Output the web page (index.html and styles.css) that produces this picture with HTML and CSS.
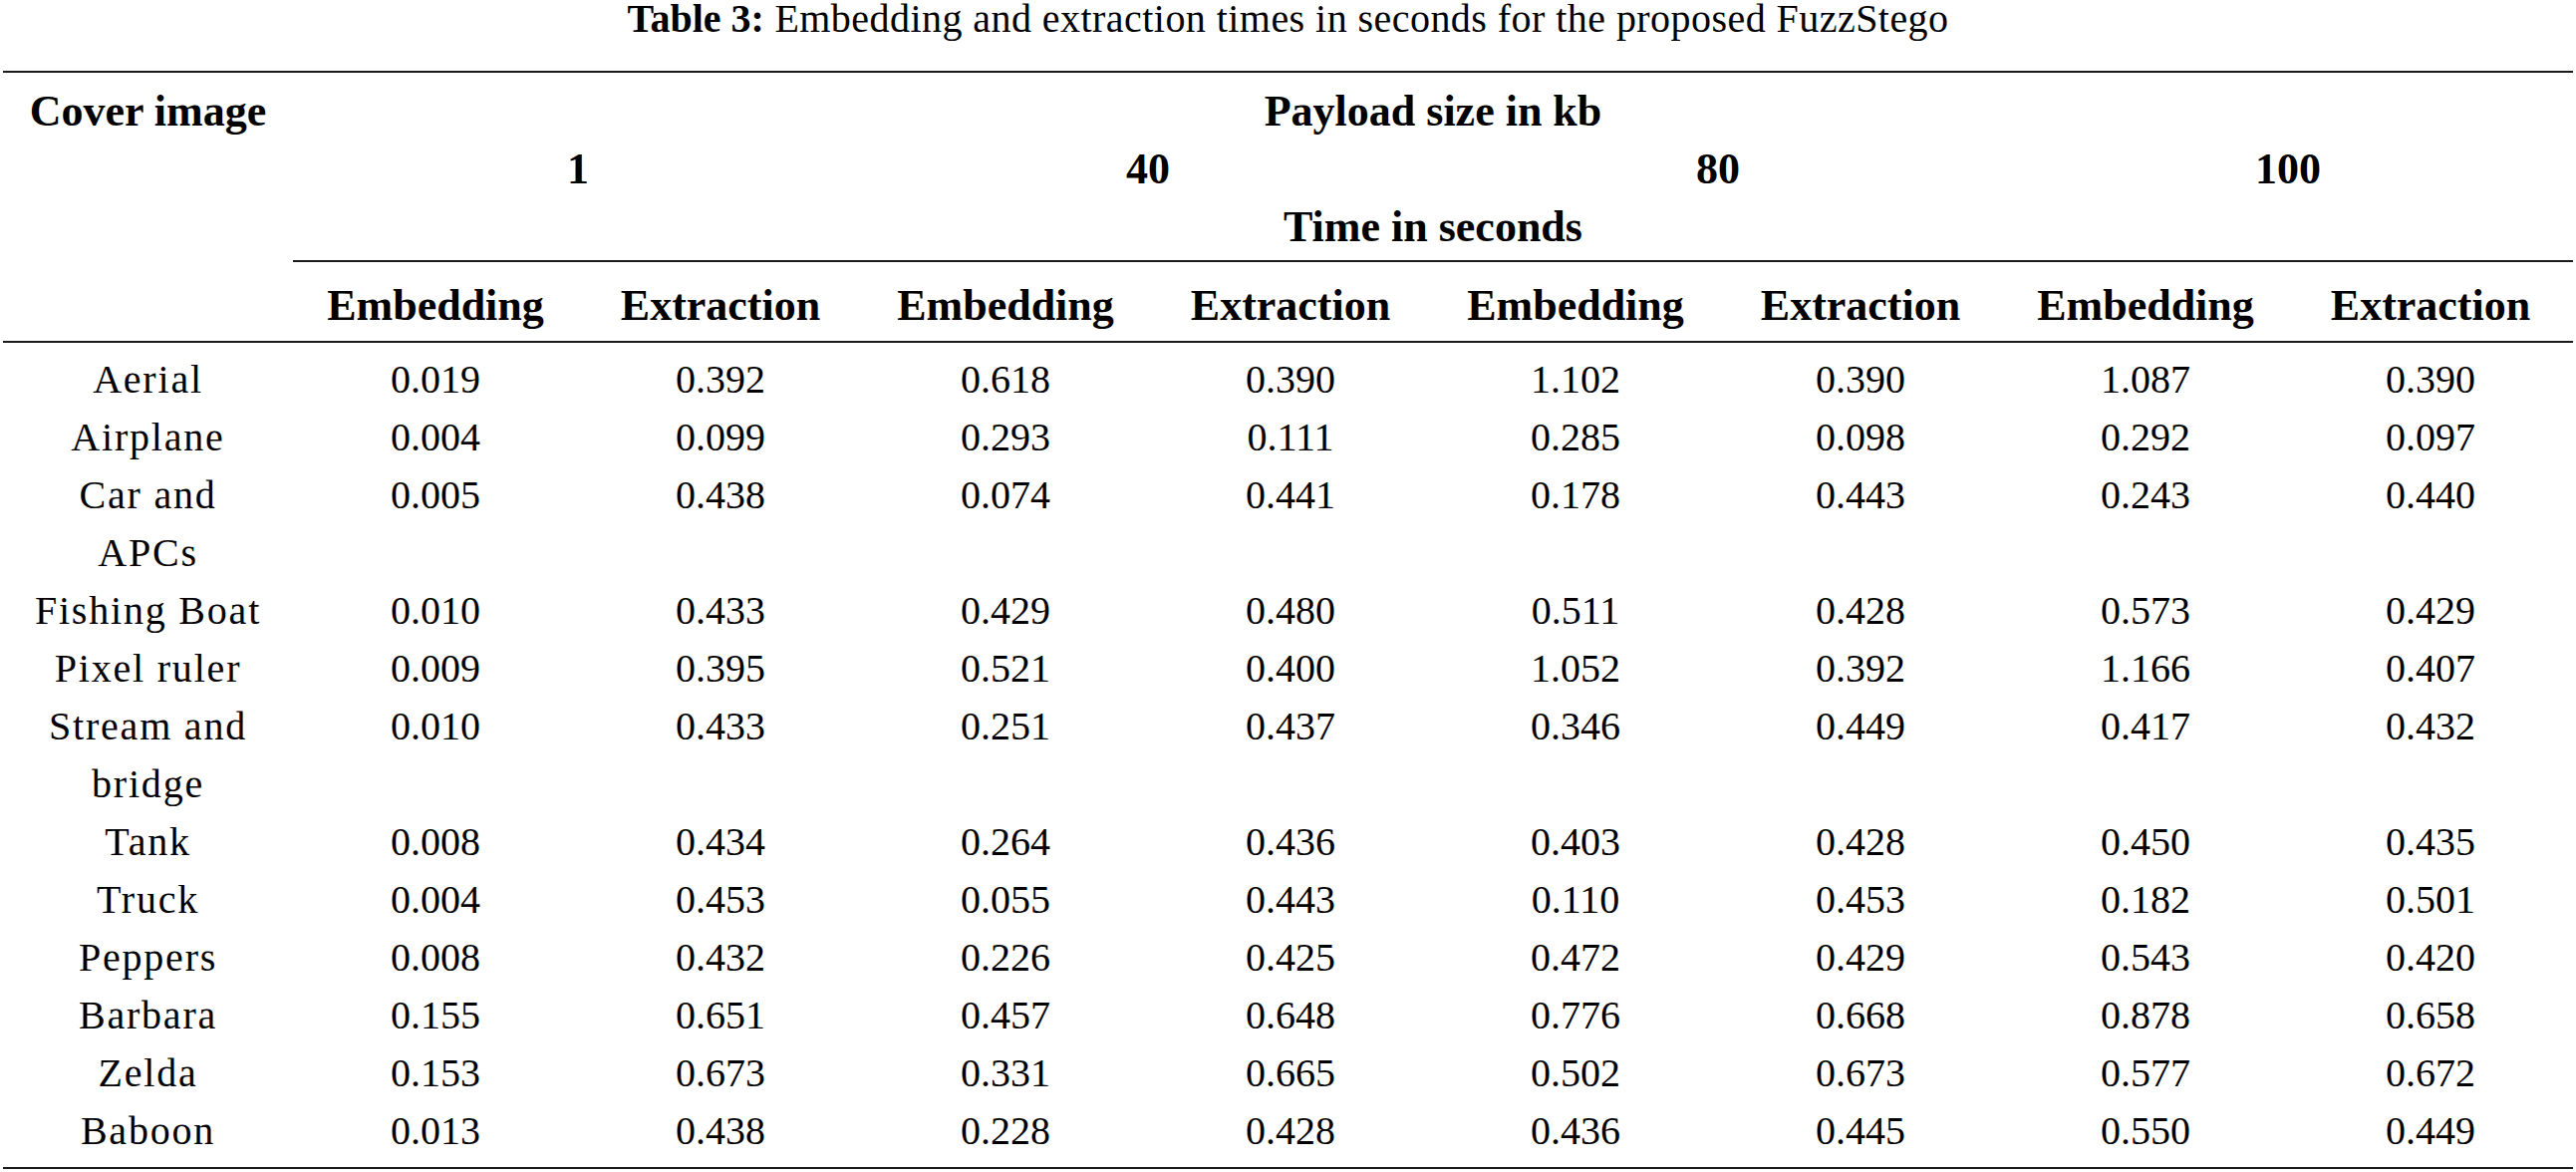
FILE: index.html
```html
<!DOCTYPE html>
<html lang="en">
<head>
<meta charset="utf-8">
<title>Table 3</title>
<link rel="stylesheet" href="styles.css">
</head>
<body>
<div class="page">
  <p class="caption"><b>Table 3:</b> Embedding and extraction times in seconds for the proposed FuzzStego</p>
  <table class="data-table">
    <thead>
      <tr class="h1">
        <th class="cover">Cover image</th>
        <th colspan="8">Payload size in kb</th>
      </tr>
      <tr class="h2">
        <th class="cover"></th>
        <th colspan="2">1</th>
        <th colspan="2">40</th>
        <th colspan="2">80</th>
        <th colspan="2">100</th>
      </tr>
      <tr class="h3">
        <th class="cover"></th>
        <th colspan="8" class="ruled">Time in seconds</th>
      </tr>
      <tr class="h4">
        <th class="cover"></th>
        <th>Embedding</th><th>Extraction</th>
        <th>Embedding</th><th>Extraction</th>
        <th>Embedding</th><th>Extraction</th>
        <th>Embedding</th><th>Extraction</th>
      </tr>
    </thead>
    <tbody>
      <tr><td class="label">Aerial</td><td>0.019</td><td>0.392</td><td>0.618</td><td>0.390</td><td>1.102</td><td>0.390</td><td>1.087</td><td>0.390</td></tr>
      <tr><td class="label">Airplane</td><td>0.004</td><td>0.099</td><td>0.293</td><td>0.111</td><td>0.285</td><td>0.098</td><td>0.292</td><td>0.097</td></tr>
      <tr><td class="label">Car and APCs</td><td>0.005</td><td>0.438</td><td>0.074</td><td>0.441</td><td>0.178</td><td>0.443</td><td>0.243</td><td>0.440</td></tr>
      <tr><td class="label">Fishing Boat</td><td>0.010</td><td>0.433</td><td>0.429</td><td>0.480</td><td>0.511</td><td>0.428</td><td>0.573</td><td>0.429</td></tr>
      <tr><td class="label">Pixel ruler</td><td>0.009</td><td>0.395</td><td>0.521</td><td>0.400</td><td>1.052</td><td>0.392</td><td>1.166</td><td>0.407</td></tr>
      <tr><td class="label">Stream and bridge</td><td>0.010</td><td>0.433</td><td>0.251</td><td>0.437</td><td>0.346</td><td>0.449</td><td>0.417</td><td>0.432</td></tr>
      <tr><td class="label">Tank</td><td>0.008</td><td>0.434</td><td>0.264</td><td>0.436</td><td>0.403</td><td>0.428</td><td>0.450</td><td>0.435</td></tr>
      <tr><td class="label">Truck</td><td>0.004</td><td>0.453</td><td>0.055</td><td>0.443</td><td>0.110</td><td>0.453</td><td>0.182</td><td>0.501</td></tr>
      <tr><td class="label">Peppers</td><td>0.008</td><td>0.432</td><td>0.226</td><td>0.425</td><td>0.472</td><td>0.429</td><td>0.543</td><td>0.420</td></tr>
      <tr><td class="label">Barbara</td><td>0.155</td><td>0.651</td><td>0.457</td><td>0.648</td><td>0.776</td><td>0.668</td><td>0.878</td><td>0.658</td></tr>
      <tr><td class="label">Zelda</td><td>0.153</td><td>0.673</td><td>0.331</td><td>0.665</td><td>0.502</td><td>0.673</td><td>0.577</td><td>0.672</td></tr>
      <tr><td class="label">Baboon</td><td>0.013</td><td>0.438</td><td>0.228</td><td>0.428</td><td>0.436</td><td>0.445</td><td>0.550</td><td>0.449</td></tr>
    </tbody>
  </table>
</div>
</body>
</html>
```
FILE: styles.css
```css
html, body {
  margin: 0;
  padding: 0;
  background: #ffffff;
}

body {
  font-family: "Liberation Serif", "Times New Roman", serif;
  color: #000000;
}

.page {
  padding: 0 3px;
}

.caption {
  margin: 0 0 34px 0;
  font-size: 40px;
  line-height: 37px;
  text-align: center;
  letter-spacing: 0.45px;
}

.caption b {
  font-weight: 700;
  letter-spacing: 0;
}

.data-table {
  width: 100%;
  border-collapse: separate;
  border-spacing: 0;
  table-layout: fixed;
}

.data-table th,
.data-table td {
  padding: 0;
  text-align: center;
  vertical-align: top;
}

.data-table th {
  font-size: 44px;
  font-weight: 700;
  line-height: 58px;
}

.data-table th.cover {
  width: 291px;
}

.h1 th {
  border-top: 2px solid #1a1a1a;
  padding-top: 10px;
}

.h3 th {
  padding-bottom: 4px;
}

.h3 th.ruled {
  border-bottom: 2px solid #1a1a1a;
}

.h4 th {
  padding-top: 15px;
  padding-bottom: 6px;
  border-bottom: 2px solid #1a1a1a;
}

.data-table td {
  font-size: 40px;
  line-height: 58px;
}

.data-table td.label {
  letter-spacing: 1.8px;
  padding-left: 22px;
  padding-right: 22px;
}

tbody tr:first-child td {
  padding-top: 8px;
}

tbody tr:last-child td {
  padding-bottom: 7px;
  border-bottom: 2px solid #1a1a1a;
}
```
